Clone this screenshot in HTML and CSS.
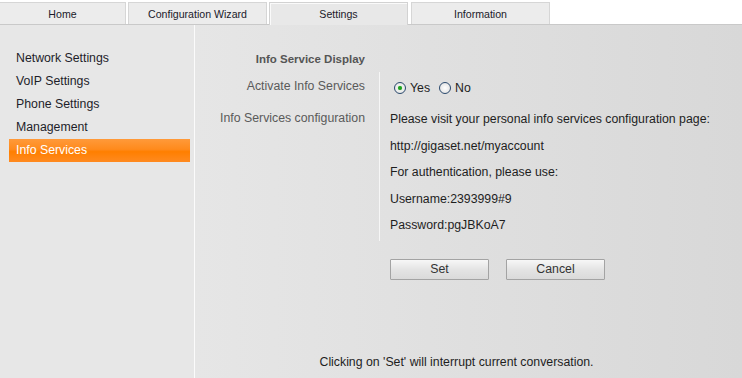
FILE: index.html
```html
<!DOCTYPE html>
<html lang="en">
<head>
  <meta charset="UTF-8">
  <meta name="viewport" content="width=device-width, initial-scale=1.0">
  <title>Settings - Info Services</title>
  <link rel="stylesheet" href="styles.css">
</head>
<body>
  <div class="tabs">
    <div class="tab tab-home">Home</div>
    <div class="tab">Configuration Wizard</div>
    <div class="tab active">Settings</div>
    <div class="tab">Information</div>
  </div>

  <div class="main">
    <ul class="sidebar">
      <li>Network Settings</li>
      <li>VoIP Settings</li>
      <li>Phone Settings</li>
      <li>Management</li>
      <li class="selected">Info Services</li>
    </ul>

    <div class="content">
      <div class="form">
        <div class="heading">Info Service Display</div>
        <div></div>

        <div class="label label-radio">Activate Info Services</div>
        <div class="value value-radio">
          <label><input type="radio" name="info" checked> Yes</label>
          <label><input type="radio" name="info"> No</label>
        </div>

        <div class="label">Info Services configuration</div>
        <div class="value value-text">
          <p>Please visit your personal info services configuration page:</p>
          <p>http://gigaset.net/myaccount</p>
          <p>For authentication, please use:</p>
          <p>Username:2393999#9</p>
          <p>Password:pgJBKoA7</p>
        </div>
      </div>

      <div class="buttons">
        <button>Set</button>
        <button>Cancel</button>
      </div>

      <div class="note">Clicking on 'Set' will interrupt current conversation.</div>
    </div>
  </div>
</body>
</html>
```

FILE: styles.css
```css
/* Base */
body {
  margin: 0;
  font-family: "Liberation Sans", Arial, sans-serif;
  font-size: 12.3px;
  color: #1e1e1e;
  background: #fff;
  height: 378px;
  overflow: hidden;
}

/* ***** Tabs ***** */
.tabs {
  display: flex;
  align-items: flex-end;
  gap: 2px;
  height: 24px;
  border-bottom: 1px solid #c9c9c9;
}

.tab {
  box-sizing: border-box;
  width: 139px;
  height: 22px;
  line-height: 22px;
  text-align: center;
  font-size: 10.6px;
  color: #1a1a2a;
  background: #ececec;
  border: 1px solid #d6d6d6;
  border-bottom: none;
}

.tab-home {
  width: 127px;
  margin-left: -1px;
}

.tab.active {
  height: 23px;
  margin-bottom: -1px;
  background: #e8e8e8;
  border-color: #d2d2d2;
  box-shadow: inset 1px 1px 0 #fafafa;
}

.tab.active + .tab {
  margin-left: 1px;
}

/* ***** Main area ***** */
.main {
  display: flex;
  height: 353px;
}

.sidebar {
  list-style: none;
  margin: 0;
  padding: 22px 4px 0 9px;
  width: 181px;
  background: #e7e7e7;
  border-right: 1px solid #fbfbfb;

  & li {
    height: 23px;
    line-height: 23px;
    padding-left: 7px;
    color: #1e1e2a;
  }

  & li.selected {
    color: #fff;
    background: linear-gradient(#ff9a3a 0%, #ff8a1c 45%, #ff7f00 55%, #ff8a20 100%);
  }
}

.content {
  flex: 1;
  display: flex;
  flex-direction: column;
  padding-top: 25px;
  background: linear-gradient(to right, #e6e6e6, #d8d8d8);
}

/* ***** Form ***** */
.form {
  display: grid;
  grid-template-columns: 184px 1fr;
}

.heading {
  text-align: right;
  padding: 1px 14px 0 0;
  line-height: 16px;
  height: 21px;
  font-size: 11.5px;
  font-weight: bold;
  color: #555;
}

.label {
  text-align: right;
  padding: 8px 14px 0 0;
  line-height: 16px;
  color: #5a5a5a;
}

.label-radio {
  padding-top: 6px;
}

.value {
  border-left: 1px solid #f6f6f6;
  padding-left: 10px;
}

.value-radio {
  display: flex;
  align-items: center;
  gap: 5px;
  height: 30px;
  padding-top: 2px;
  box-sizing: border-box;

  & label {
    display: flex;
    align-items: center;
    gap: 2px;
    color: #1e1e1e;
  }

  & input {
    appearance: none;
    margin: 0 2px 0 4px;
    width: 12px;
    height: 12px;
    border-radius: 50%;
    border: 1px solid #2b4a6e;
    background: radial-gradient(#ffffff, #dcdcdc);
    position: relative;
  }

  & input:checked::after {
    content: '';
    position: absolute;
    left: 3px;
    top: 3px;
    width: 4px;
    height: 4px;
    border-radius: 50%;
    background: #1ea01e;
    box-shadow: 0 0 1px #5fd05f;
  }
}

.value-text {
  padding-top: 4px;
  padding-bottom: 2px;

  & p {
    margin: 0;
    line-height: 26.5px;
  }
}

/* ***** Buttons ***** */
.buttons {
  display: flex;
  gap: 17px;
  margin: 18px 0 0 195px;

  & button {
    width: 99px;
    height: 21px;
    padding: 0;
    font-family: "Liberation Sans", Arial, sans-serif;
    font-size: 12.3px;
    color: #333;
    border: 1px solid #a3a3a3;
    border-radius: 1px;
    background: linear-gradient(#f7f7f7, #e4e4e4 50%, #dadada);
  }
}

.note {
  margin-top: auto;
  padding: 0 24px 8px 0;
  line-height: 16px;
  text-align: center;
  color: #1e1e1e;
}
```
